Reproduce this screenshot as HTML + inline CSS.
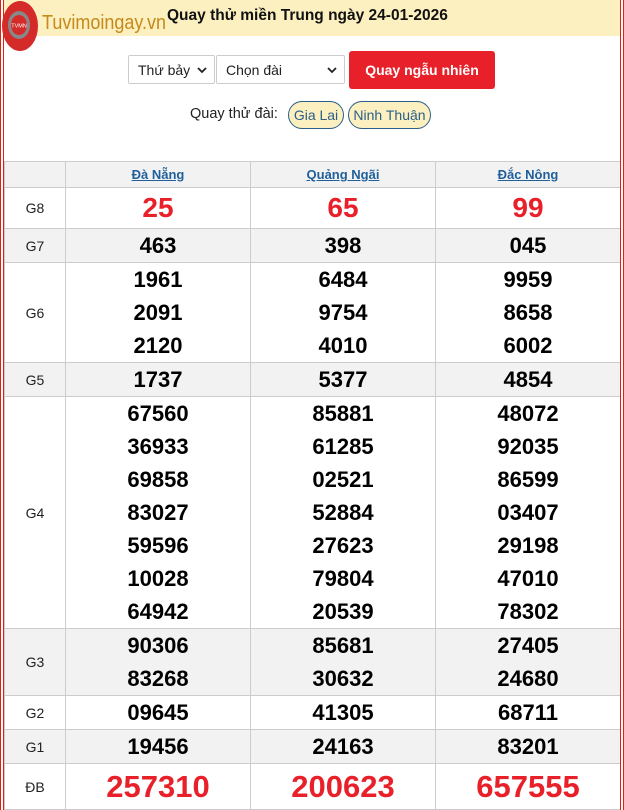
<!DOCTYPE html>
<html><head><meta charset="utf-8"><style>
*{box-sizing:border-box;margin:0;padding:0}
html,body{width:624px;height:810px;overflow:hidden;background:#fff;font-family:"Liberation Sans",Arial,sans-serif}
.frame{position:absolute;left:0;top:0;width:624px;height:810px;border-left:1px solid #d21;border-right:1px solid #d21;z-index:5}
.frame2{position:absolute;left:3px;top:0;width:618px;height:810px;border-left:1px solid #d21;border-right:1px solid #d21;z-index:5}
.hdr{position:absolute;left:4px;top:0;width:616px;height:36px;background:#fcefc0}
.title{position:absolute;left:167px;top:7px;font-size:15.5px;font-weight:bold;color:#111}
.logo{position:absolute;left:1px;top:0;width:38px;height:54px;z-index:6}
.brand{position:absolute;left:42px;top:12px;font-size:20px;color:#c48a1a;transform:scaleX(.9);transform-origin:0 0}
.sel{position:absolute;top:55px;height:29px;border:1px solid #ccc;border-radius:2px;background:#fff;font-size:14px;color:#222;padding:6px 0 0 9px}
.sel svg{position:absolute;right:7px;top:10px}
.btn{position:absolute;left:349px;top:51px;width:146px;height:38px;background:#e8202a;border-radius:3px;color:#fff;font-weight:bold;font-size:14px;text-align:center;line-height:38px}
.q{position:absolute;left:190px;top:106px;font-size:14.5px;color:#222}
.pill{position:absolute;top:101px;height:28px;border:1px solid #2b5f8a;border-radius:14px;background:#fcefc0;color:#2b5f8a;font-size:14px;line-height:26px;text-align:center}
table{position:absolute;left:4px;top:161px;width:616px;border-collapse:collapse;table-layout:fixed}
td{border:1px solid #ccc;text-align:center;vertical-align:middle}
td.l{font-size:14px;color:#222}
.g td{background:#f2f2f2}
th{border:1px solid #ccc;background:#f2f2f2;height:26px;font-size:13px;font-weight:bold;color:#1f5f9a;text-decoration:underline}
.n{font-size:22px;font-weight:bold;color:#000;line-height:33px}
.r{font-size:28px;font-weight:bold;color:#e8202a}
.d{font-size:31px;font-weight:bold;color:#e8202a}
</style></head><body>
<div class="hdr"></div>
<div class="frame"></div><div class="frame2"></div>
<svg class="logo" viewBox="0 0 38 54"><ellipse cx="19" cy="26" rx="18" ry="25" fill="#d42a2a"/><ellipse cx="18" cy="25" rx="11" ry="14" fill="#888"/><ellipse cx="18" cy="25" rx="8" ry="10" fill="#d42a2a"/><text x="18" y="27.5" font-size="5.5" fill="#fff" text-anchor="middle" font-family="Liberation Sans">TVMN</text></svg>
<div class="brand">Tuvimoingay.vn</div>
<div class="title">Quay thử miền Trung ngày 24-01-2026</div>
<div class="sel" style="left:128px;width:87px">Thứ bảy<svg width="10" height="8" viewBox="0 0 10 8"><path d="M1 2l4 4 4-4" stroke="#222" stroke-width="1.8" fill="none"/></svg></div>
<div class="sel" style="left:216px;width:129px">Chọn đài<svg width="10" height="8" viewBox="0 0 10 8"><path d="M1 2l4 4 4-4" stroke="#222" stroke-width="1.8" fill="none"/></svg></div>
<div class="btn">Quay ngẫu nhiên</div>
<div class="q">Quay thử đài:</div>
<div class="pill" style="left:288px;width:56px">Gia Lai</div>
<div class="pill" style="left:348px;width:83px">Ninh Thuận</div>
<table>
<colgroup><col style="width:61px"><col style="width:185px"><col style="width:185px"><col style="width:185px"></colgroup>
<tr><th></th><th>Đà Nẵng</th><th>Quảng Ngãi</th><th>Đắc Nông</th></tr>
<tr style="height:41px"><td class="l">G8</td><td class="r">25</td><td class="r">65</td><td class="r">99</td></tr>
<tr class="g" style="height:34px"><td class="l">G7</td><td class="n">463</td><td class="n">398</td><td class="n">045</td></tr>
<tr style="height:100px"><td class="l">G6</td><td class="n">1961<br>2091<br>2120</td><td class="n">6484<br>9754<br>4010</td><td class="n">9959<br>8658<br>6002</td></tr>
<tr class="g" style="height:34px"><td class="l">G5</td><td class="n">1737</td><td class="n">5377</td><td class="n">4854</td></tr>
<tr style="height:232px"><td class="l">G4</td><td class="n">67560<br>36933<br>69858<br>83027<br>59596<br>10028<br>64942</td><td class="n">85881<br>61285<br>02521<br>52884<br>27623<br>79804<br>20539</td><td class="n">48072<br>92035<br>86599<br>03407<br>29198<br>47010<br>78302</td></tr>
<tr class="g" style="height:67px"><td class="l">G3</td><td class="n">90306<br>83268</td><td class="n">85681<br>30632</td><td class="n">27405<br>24680</td></tr>
<tr style="height:34px"><td class="l">G2</td><td class="n">09645</td><td class="n">41305</td><td class="n">68711</td></tr>
<tr class="g" style="height:33px"><td class="l">G1</td><td class="n">19456</td><td class="n">24163</td><td class="n">83201</td></tr>
<tr style="height:46px"><td class="l">ĐB</td><td class="d">257310</td><td class="d">200623</td><td class="d">657555</td></tr>
</table>
</body></html>
